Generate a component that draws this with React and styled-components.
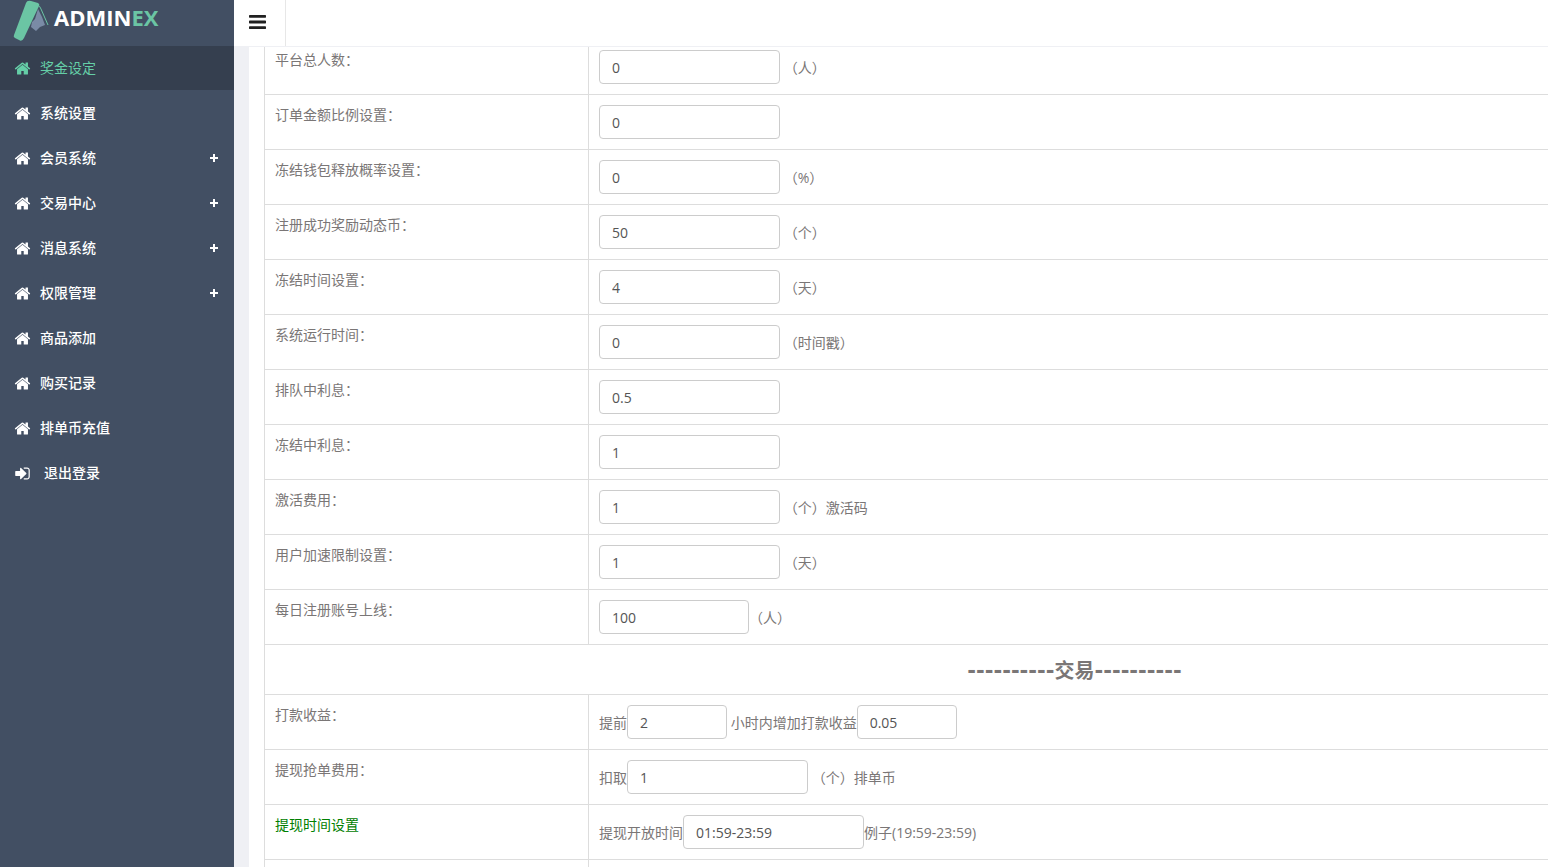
import React from 'react';
import styled, { createGlobalStyle } from 'styled-components';

const GlobalStyle = createGlobalStyle`
  * {
    box-sizing: border-box;
  }

  body {
    margin: 0;
    background: #424f63;
    color: #7a7676;
    font-family: 'Open Sans', 'Noto Sans CJK SC', sans-serif;
    font-size: 14px;
    line-height: 20px;
  }
`;

// Layout
const Shell = styled.div`
  display: flex;
  height: 100vh;
  overflow: hidden;
`;

const Sidebar = styled.aside`
  flex: 0 0 234px;
  background: #424f63;
`;

const Main = styled.main`
  flex: 1;
  min-width: 0;
  display: flex;
  flex-direction: column;
  background: #eff0f4;
`;

// Logo
const Logo = styled.a`
  display: flex;
  align-items: flex-start;
  gap: 5px;
  height: 46px;
  padding-left: 13px;
  color: #fff;
  font-size: 22px;
  font-weight: 700;
  line-height: 34px;
  text-decoration: none;

  span {
    color: #6bc5a4;
  }
`;

// Side menu
const Menu = styled.ul`
  list-style: none;
  margin: 0;
  padding: 0;
`;

const MenuItem = styled.li`
  padding-bottom: 1px;
`;

const MenuLink = styled.a`
  display: flex;
  align-items: center;
  gap: ${({ $wide }) => ($wide ? '13px' : '9px')};
  height: 44px;
  padding: 0 16px 0 14px;
  background: ${({ $active }) => ($active ? '#353f4f' : 'transparent')};
  color: ${({ $active }) => ($active ? '#65cea7' : '#fff')};
  font-weight: ${({ $active }) => ($active ? 400 : 500)};
  text-decoration: none;

  &:hover {
    background: #353f4f;
    color: #65cea7;
  }
`;

const MenuIcon = styled.svg`
  flex: none;
  width: 17px;
  height: 17px;
  fill: currentColor;
`;

const PlusIcon = styled.svg`
  width: 8px;
  height: 8px;
  margin-left: auto;
  fill: currentColor;
`;

// Header
const Header = styled.header`
  position: relative;
  z-index: 1;
  flex: 0 0 47px;
  display: flex;
  background: #fff;
  border-bottom: 1px solid #eff0f4;
`;

const ToggleButton = styled.button`
  display: flex;
  align-items: center;
  width: 52px;
  padding: 0 0 2px 15px;
  border: none;
  border-right: 1px solid #e7e7e7;
  background: #fff;
  color: #212121;
  cursor: pointer;

  svg {
    width: 17px;
    height: 20px;
    fill: currentColor;
  }
`;

// Settings table
const Panel = styled.section`
  flex: 1;
  min-height: 0;
  margin-left: 15px;
  padding-left: 15px;
  background: #fff;
  overflow: hidden;
`;

const Table = styled.table`
  width: 100%;
  min-width: 1621px;
  margin-top: -8px;
  border-collapse: collapse;
  table-layout: fixed;
`;

const LabelCell = styled.th`
  width: 20%;
  padding: 10px;
  border: 1px solid #ddd;
  color: ${({ $green }) => ($green ? 'green' : 'inherit')};
  font-weight: 400;
  text-align: left;
  vertical-align: top;
`;

const FieldCell = styled.td`
  padding: 10px;
  border: 1px solid #ddd;
`;

const Field = styled.div`
  display: flex;
  height: 34px;
  line-height: 36px;
  white-space: pre;
`;

const TitleCell = styled.th`
  height: 50px;
  padding: 2px 0 0;
  border: 1px solid #ddd;
  font-size: 20px;
  font-weight: 700;
  text-align: center;
`;

const Dashes = styled.span`
  font-family: 'DejaVu Sans', sans-serif;
  font-size: 21px;
`;

const sizes = { small: '100px', medium: '150px', large: '181px' };

const Input = styled.input`
  width: ${({ $size }) => sizes[$size]};
  height: 34px;
  padding: 6px 12px;
  border: 1px solid #ccc;
  border-radius: 4px;
  background: #fff;
  color: #555;
  font: inherit;
  line-height: 20px;

  &:focus {
    border-color: #65cea7;
    outline: none;
  }
`;

const menu = [
  { text: '奖金设定', active: true },
  { text: '系统设置' },
  { text: '会员系统', children: true },
  { text: '交易中心', children: true },
  { text: '消息系统', children: true },
  { text: '权限管理', children: true },
  { text: '商品添加' },
  { text: '购买记录' },
  { text: '排单币充值' },
  { text: '退出登录', logout: true },
];

// a string in parts is plain text, an object is an input
const baseRows = [
  { label: '平台总人数：', parts: [{ value: '0' }, ' （人）'] },
  { label: '订单金额比例设置：', parts: [{ value: '0' }] },
  { label: '冻结钱包释放概率设置：', parts: [{ value: '0' }, ' （%）'] },
  { label: '注册成功奖励动态币：', parts: [{ value: '50' }, ' （个）'] },
  { label: '冻结时间设置：', parts: [{ value: '4' }, ' （天）'] },
  { label: '系统运行时间：', parts: [{ value: '0' }, ' （时间戳）'] },
  { label: '排队中利息：', parts: [{ value: '0.5' }] },
  { label: '冻结中利息：', parts: [{ value: '1' }] },
  { label: '激活费用：', parts: [{ value: '1' }, ' （个）激活码'] },
  { label: '用户加速限制设置：', parts: [{ value: '1' }, ' （天）'] },
  { label: '每日注册账号上线：', parts: [{ value: '100', size: 'medium' }, '（人）'] },
];

const tradeRows = [
  {
    label: '打款收益：',
    parts: ['提前', { value: '2', size: 'small' }, ' 小时内增加打款收益', { value: '0.05', size: 'small' }],
  },
  { label: '提现抢单费用：', parts: ['扣取', { value: '1' }, ' （个）排单币'] },
  { label: '提现时间设置', green: true, parts: ['提现开放时间', { value: '01:59-23:59' }, '例子(19:59-23:59)'] },
  { label: '', parts: [] },
];

const HomeIcon = () => (
  <MenuIcon viewBox="0 0 1664 1792" aria-hidden="true">
    <path d="M1408 992v480q0 26-19 45t-45 19h-384v-384h-256v384h-384q-26 0-45-19t-19-45v-480q0-1 .5-3t.5-3l575-474 575 474q1 2 1 6zm223-69l-62 74q-8 9-21 11h-3q-13 0-21-7l-692-577-692 577q-12 8-24 7-13-2-21-11l-62-74q-8-10-7-23.5t11-21.5l719-599q32-26 76-26t76 26l244 204v-195q0-14 9-23t23-9h192q14 0 23 9t9 23v408l219 182q10 8 11 21.5t-7 23.5z" />
  </MenuIcon>
);

const SignInIcon = () => (
  <MenuIcon viewBox="0 0 1536 1792" aria-hidden="true">
    <path d="M1184 896q0 26-19 45l-544 544q-19 19-45 19t-45-19-19-45v-288h-448q-26 0-45-19t-19-45v-384q0-26 19-45t45-19h448v-288q0-26 19-45t45-19 45 19l544 544q19 19 19 45zm352-352v704q0 119-84.5 203.5t-203.5 84.5h-320q-13 0-22.5-9.5t-9.5-22.5q0-4-1-20t-.5-26.5 3-23.5 10-19.5 20.5-6.5h320q66 0 113-47t47-113v-704q0-66-47-113t-113-47h-312l-11.5-1-11.5-3-8-5.5-7-9-2-13.5q0-4-1-20t-.5-26.5 3-23.5 10-19.5 20.5-6.5h320q119 0 203.5 84.5t84.5 203.5z" />
  </MenuIcon>
);

const LogoMark = () => (
  <svg width="36" height="42" viewBox="0 0 36 42" aria-hidden="true">
    <path d="M25 9L22 19L19 22L18 27L23 31L27 27L32 25L29 17Z" fill="#7a8ba6" />
    <path d="M13 3Q14 0 18 1L25 3Q27 4 26 6L11 38Q9 42 6 40L2 38Q0 37 1 35Z" fill="#6bc5a4" />
    <path d="M24 4Q27 6 28 9L35 25" fill="none" stroke="#6bc5a4" strokeWidth="1" />
  </svg>
);

const SettingRow = ({ row }) => (
  <tr>
    <LabelCell scope="row" $green={row.green}>{row.label}</LabelCell>
    <FieldCell>
      <Field>
        {row.parts.map((part, i) =>
          typeof part === 'string' ? (
            <span key={i}>{part}</span>
          ) : (
            <Input key={i} type="text" aria-label={row.label} defaultValue={part.value} $size={part.size || 'large'} />
          )
        )}
      </Field>
    </FieldCell>
  </tr>
);

const App = () => (
  <>
    <GlobalStyle />
    <Shell>
      <Sidebar>
        <Logo href="#">
          <LogoMark />
          <div>ADMIN<span>EX</span></div>
        </Logo>
        <Menu>
          {menu.map((item) => (
            <MenuItem key={item.text}>
              <MenuLink href="#" $active={item.active} $wide={item.logout}>
                {item.logout ? <SignInIcon /> : <HomeIcon />}
                <span>{item.text}</span>
                {item.children && (
                  <PlusIcon viewBox="0 0 8 8" aria-hidden="true">
                    <path d="M3 0h2v3h3v2H5v3H3V5H0V3h3z" />
                  </PlusIcon>
                )}
              </MenuLink>
            </MenuItem>
          ))}
        </Menu>
      </Sidebar>

      <Main>
        <Header>
          <ToggleButton type="button" aria-label="Menu">
            <svg viewBox="0 0 1536 1792" aria-hidden="true">
              <path d="M1536 1344v128q0 26-19 45t-45 19h-1408q-26 0-45-19t-19-45v-128q0-26 19-45t45-19h1408q26 0 45 19t19 45zm0-512v128q0 26-19 45t-45 19h-1408q-26 0-45-19t-19-45v-128q0-26 19-45t45-19h1408q26 0 45 19t19 45zm0-512v128q0 26-19 45t-45 19h-1408q-26 0-45-19t-19-45v-128q0-26 19-45t45-19h1408q26 0 45 19t19 45z" />
            </svg>
          </ToggleButton>
        </Header>

        <Panel>
          <Table>
            <tbody>
              {baseRows.map((row) => (
                <SettingRow key={row.label} row={row} />
              ))}
              <tr>
                <TitleCell colSpan={2}>
                  <Dashes>----------</Dashes>交易<Dashes>----------</Dashes>
                </TitleCell>
              </tr>
              {tradeRows.map((row) => (
                <SettingRow key={row.label} row={row} />
              ))}
            </tbody>
          </Table>
        </Panel>
      </Main>
    </Shell>
  </>
);

export default App;
